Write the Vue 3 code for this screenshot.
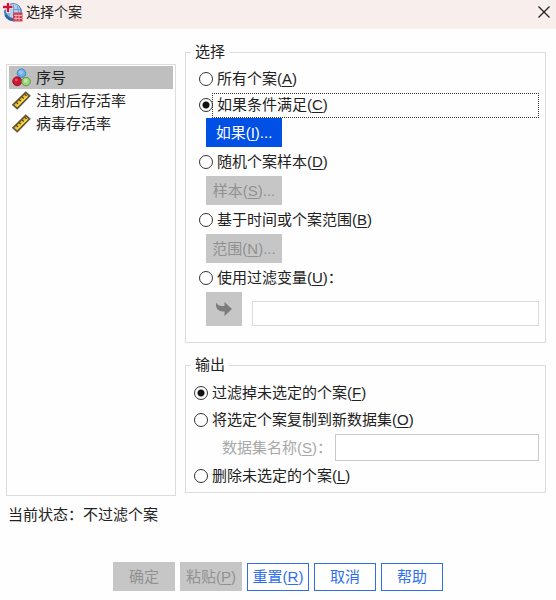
<template>
  <div class="dialog">
    <header class="title-bar">
      <svg class="app-icon" viewBox="0 0 20 20" aria-hidden="true">
        <circle cx="10" cy="10" r="9" fill="#4a82bd" />
        <circle cx="10.5" cy="9" r="7" fill="#b4d0ea" />
        <path d="M4 7.500h13M10.500 3v14M14.500 4q2 6 0 11M6.500 4q-2 6 0 11" fill="none" stroke="#6b9fd2" />
        <path d="M2.500 13q3 5 9 5" fill="none" stroke="#2d65a5" stroke-width="2.500" />
        <path d="M5 1v9.500M0 5.500h10" stroke="#fff" stroke-width="4" />
        <path d="M5 1v9M0 5h9.500" stroke="#cf1238" stroke-width="2.400" />
        <path d="M10 10.500h9.500v9H10z" fill="#cf4054" />
        <path d="M11 13.500h8M11 16.500h8M13 12.500v6M16 12.500v6" stroke="#f2c3c9" stroke-width="0.800" />
      </svg>
      <h1>选择个案</h1>
      <button class="close" type="button" aria-label="关闭">
        <svg viewBox="0 0 12 12"><path d="M.5.5l11 11M11.500.5l-11 11" stroke="#222" stroke-width="1.300" /></svg>
      </button>
    </header>

    <main class="content">
      <ul class="variables">
        <li v-for="item in variables" :key="item.name">
          <button type="button" :class="{ selected: item.name === current }" @click="current = item.name">
            <svg v-if="item.type === 'nominal'" viewBox="0 0 20 20" aria-hidden="true">
              <circle cx="10" cy="5.500" r="4.500" fill="#6eafea" stroke="#3c7fc4" />
              <circle cx="9.500" cy="4.500" r="2" fill="#9ccbf4" />
              <circle cx="5.500" cy="14" r="4.700" fill="#cb1733" stroke="#9f1028" />
              <circle cx="4.500" cy="12.500" r="1.500" fill="#e45a6c" />
              <circle cx="14.800" cy="14.300" r="4.500" fill="#9cd477" stroke="#559743" />
              <circle cx="14.500" cy="13.500" r="2" fill="#c3e8a8" />
            </svg>
            <svg v-else viewBox="0 0 20 20" aria-hidden="true">
              <path d="M1 14.500L14.500 1.500l4 3.500L5.500 18.500z" fill="#f0bd20" stroke="#5c5640" stroke-width="1.800" />
              <path d="M4.500 11.800l2 2M7.500 8.900l2 2M10.500 6l2 2M13.300 3.300l2 2" stroke="#594715" stroke-width="1.400" />
              <path d="M5 16L16 5.500" stroke="#ffdf4f" stroke-width="1.200" />
            </svg>
            <span>{{ item.name }}</span>
          </button>
        </li>
      </ul>

      <div class="options">
        <fieldset class="group select-group">
          <legend>选择</legend>
          <label class="row short">
            <input type="radio" value="all" v-model="mode" />
            <span class="text">所有个案(<u>A</u>)</span>
          </label>
          <label class="row short">
            <input type="radio" value="if" v-model="mode" />
            <span class="text focus">如果条件满足(<u>C</u>)</span>
          </label>
          <button class="btn" type="button" :disabled="mode !== 'if'">如果(<u>I</u>)...</button>
          <label class="row">
            <input type="radio" value="random" v-model="mode" />
            <span class="text">随机个案样本(<u>D</u>)</span>
          </label>
          <button class="btn" type="button" :disabled="mode !== 'random'">样本(<u>S</u>)...</button>
          <label class="row">
            <input type="radio" value="range" v-model="mode" />
            <span class="text">基于时间或个案范围(<u>B</u>)</span>
          </label>
          <button class="btn" type="button" :disabled="mode !== 'range'">范围(<u>N</u>)...</button>
          <label class="row">
            <input type="radio" value="filter" v-model="mode" />
            <span class="text">使用过滤变量(<u>U</u>)：</span>
          </label>
          <div class="filter">
            <button class="move" type="button" :disabled="mode !== 'filter'" aria-label="移入变量">
              <svg viewBox="0 0 18 16">
                <path d="M1 1.500q2 3.500 6 3.500h2.500V1L17 8l-7.500 7v-4.500H7Q0 9.500 1 1.500z" fill="#7c7c7c" />
              </svg>
            </button>
            <input type="text" v-model="filterVariable" :disabled="mode !== 'filter'" aria-label="过滤变量" />
          </div>
        </fieldset>

        <fieldset class="group output-group">
          <legend>输出</legend>
          <label class="row">
            <input type="radio" value="filter" v-model="output" />
            <span class="text">过滤掉未选定的个案(<u>F</u>)</span>
          </label>
          <label class="row">
            <input type="radio" value="copy" v-model="output" />
            <span class="text">将选定个案复制到新数据集(<u>O</u>)</span>
          </label>
          <div class="dataset">
            <label for="dataset">数据集名称(<u>S</u>)：</label>
            <input id="dataset" type="text" v-model="datasetName" :disabled="output !== 'copy'" />
          </div>
          <label class="row">
            <input type="radio" value="delete" v-model="output" />
            <span class="text">删除未选定的个案(<u>L</u>)</span>
          </label>
        </fieldset>
      </div>
    </main>

    <p class="status">当前状态：不过滤个案</p>

    <footer class="actions">
      <button class="btn" type="button" disabled>确定</button>
      <button class="btn" type="button" disabled>粘贴(<u>P</u>)</button>
      <button class="btn outline" type="button" @click="reset">重置(<u>R</u>)</button>
      <button class="btn outline" type="button">取消</button>
      <button class="btn outline" type="button">帮助</button>
    </footer>
  </div>
</template>

<script setup>
import { ref } from "vue";

const variables = [
  { name: "序号", type: "nominal" },
  { name: "注射后存活率", type: "scale" },
  { name: "病毒存活率", type: "scale" },
];

const current = ref("序号");
const mode = ref("if");
const output = ref("filter");
const filterVariable = ref("");
const datasetName = ref("");

const reset = () => {
  mode.value = "all";
  output.value = "filter";
  filterVariable.value = "";
  datasetName.value = "";
};
</script>

<style>
body {
  margin: 0;
  background: #fefefe;
}
</style>

<style scoped>
.dialog {
  font-family: "Liberation Sans", "Noto Sans CJK SC", sans-serif;
  font-size: 15px;
  line-height: 20px;
  color: #222;
}

.dialog * {
  box-sizing: border-box;
}

button,
input {
  font: inherit;
  color: inherit;
}

button {
  padding: 0;
  border: 0;
  background: none;
}

u {
  text-underline-offset: 2px;
}

.title-bar {
  display: flex;
  align-items: center;
  height: 29px;
  padding: 0 6px 5px 3px;
  background: #f8efed;
}

.title-bar h1 {
  flex: 1;
  margin: 0 0 0 3px;
  font-size: 14px;
  font-weight: normal;
}

.app-icon {
  width: 20px;
  height: 20px;
}

.close {
  display: flex;
}

.close svg {
  width: 12px;
  height: 12px;
}

.content {
  display: flex;
  gap: 9px;
  padding: 13px 10px 0 6px;
}

.variables {
  flex: 0 1 170px;
  margin: 22px 0 0;
  padding: 1px 2px;
  border: 1px solid #dcdcdc;
  list-style: none;
}

.variables button {
  display: flex;
  align-items: center;
  gap: 5px;
  width: 100%;
  height: 23px;
  padding-left: 3px;
}

.variables button.selected {
  background: #bfbfbf;
}

.variables svg {
  width: 19px;
  height: 19px;
}

.options {
  flex: 1;
  min-width: 0;
  margin-bottom: 3px;
}

.group {
  min-width: 0;
  margin: 0;
  border: 1px solid #dcdcdc;
}

.group legend {
  padding: 0 4px;
}

.select-group {
  padding: 4px 6px 16px 13px;
}

.select-group legend {
  margin-left: -8px;
}

.output-group {
  margin-top: 12px;
  padding: 4px 6px 3px 8px;
}

.output-group legend {
  margin-left: -3px;
}

.row {
  display: flex;
  align-items: center;
  height: 29px;
}

.row.short {
  height: 26px;
}

.output-group .row {
  height: 27px;
}

.row input {
  flex: none;
  appearance: none;
  width: 14px;
  height: 14px;
  margin: 0;
  border: 1px solid #333;
  border-radius: 50%;
  background: #fff;
}

.row input:checked {
  background: radial-gradient(circle, #111 3px, transparent 4px);
}

.text {
  flex: 1;
  padding-left: 4px;
  white-space: nowrap;
}

.focus {
  margin-left: -1px;
  padding: 1px 0 2px 4px;
  border: 1px dotted #333;
}

.btn {
  display: block;
  height: 29px;
  color: #fff;
  background: #0050e6;
  white-space: nowrap;
}

.btn:disabled {
  color: #919191;
  background: #c6c6c6;
}

.select-group .btn {
  width: 76px;
  margin-left: 7px;
}

.filter {
  display: flex;
  align-items: flex-end;
  gap: 10px;
  padding-left: 7px;
}

.move {
  display: flex;
  align-items: center;
  justify-content: center;
  width: 36px;
  height: 34px;
  background: #c6c6c6;
}

.move svg {
  width: 18px;
  height: 16px;
}

.filter input,
.dataset input {
  flex: 1;
  min-width: 0;
  height: 25px;
  padding: 0 4px;
  border: 1px solid #dcdcdc;
  background: #fff;
}

.dataset {
  display: flex;
  align-items: center;
  height: 29px;
  padding-left: 28px;
}

.dataset label {
  flex: 0 0 113px;
  color: #a8a8a8;
  white-space: nowrap;
}

.dataset input {
  height: 27px;
  border-color: #cacaca;
}

.status {
  margin: 9px 8px 0;
}

.actions {
  display: flex;
  align-items: center;
  justify-content: center;
  gap: 5px;
  padding: 37px 0 8px;
}

.actions .btn {
  width: 62px;
}

.actions .outline {
  height: 28px;
  border: 1px solid #2f6fed;
  color: #2f6fed;
  background: #fff;
}
</style>
